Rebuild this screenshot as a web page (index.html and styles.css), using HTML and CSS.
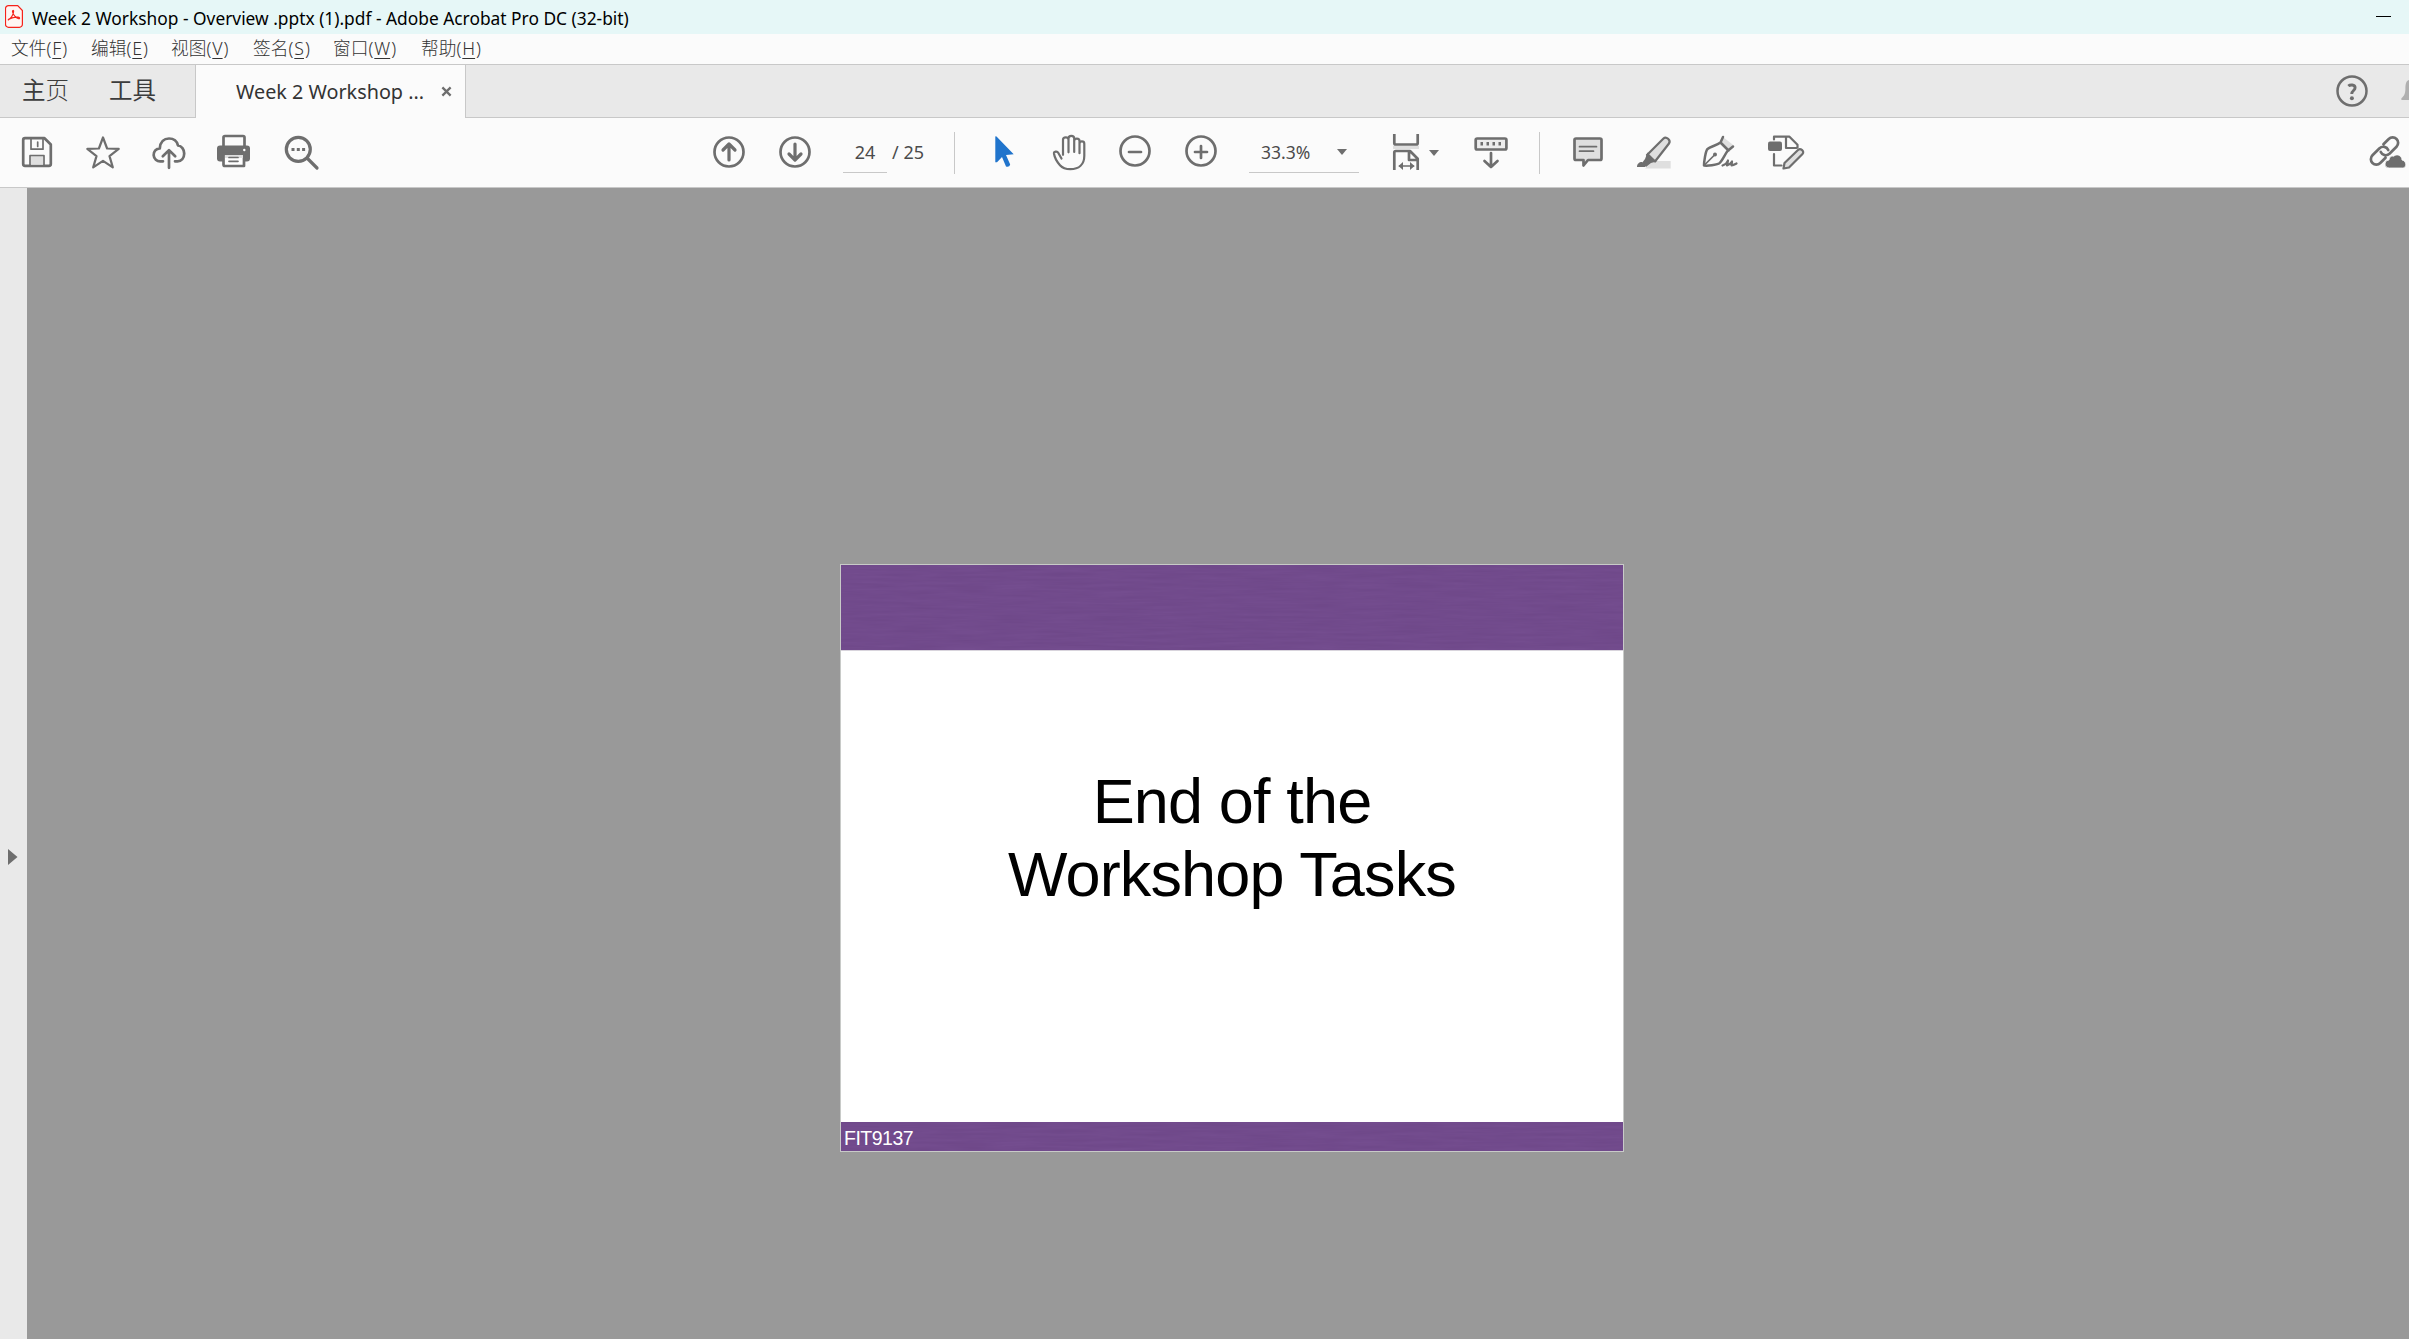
FILE: index.html
```html
<!DOCTYPE html>
<html lang="zh-CN">
<head>
<meta charset="utf-8">
<title>Week 2 Workshop - Overview .pptx (1).pdf - Adobe Acrobat Pro DC (32-bit)</title>
<link rel="stylesheet" href="styles.css">
</head>
<body>
<header class="titlebar">
  <svg class="app-icon" viewBox="0 0 18 23"><path d="M3.500 .6h9.200l4.700 4.900v13.800a3 3 0 0 1-3 3H3.500a3 3 0 0 1-3-3V3.600a3 3 0 0 1 3-3z" fill="#fff5f3" stroke="#f5231b" stroke-width="1.200"/><path d="M3.600 14.700c2-1 4.800-4.700 5-8.300.1-1.400-1.400-1.200-1 .4.600 3 3.200 6.300 5.900 6.900 1.500.3 1.500-1.300-.3-1.500-2.900-.3-6.200.4-8.800 1.700-1 .5-1.500 1.400-.8 .8z" fill="none" stroke="#f5231b" stroke-width="1.200"/></svg>
  <span class="title-text">Week 2 Workshop - Overview .pptx (1).pdf - Adobe Acrobat Pro DC (32-bit)</span>
  <span class="minimize"></span>
</header>
<nav class="menubar">
  <span>文件(<u>F</u>)</span><span>编辑(<u>E</u>)</span><span>视图(<u>V</u>)</span><span>签名(<u>S</u>)</span><span>窗口(<u>W</u>)</span><span>帮助(<u>H</u>)</span>
</nav>
<div class="tabbar">
  <div class="tab-group"><span>主<i>页</i></span><span>工具</span></div>
  <div class="tab-active"><span class="tab-name">Week 2 Workshop ...</span><svg class="close" viewBox="0 0 12 12"><path d="M1.500 1.500l9 9M10.500 1.500l-9 9" stroke="#6e6e6e" stroke-width="2.500"/></svg></div>
  <div class="tab-rest">
    <svg class="help" viewBox="0 0 32 32"><circle cx="16" cy="16" r="14.500" fill="none" stroke="#6e6e6e" stroke-width="2.500"/><path d="M12.300 11c1.500-1.300 6.800-1.900 6.800 1.700 0 2.800-3.400 2.800-3.400 6.300" fill="none" stroke="#6e6e6e" stroke-width="2.900"/><circle cx="15.900" cy="23.300" r="2" fill="#6e6e6e"/></svg>
    <svg class="bell" viewBox="0 0 8 24"><path d="M8 1C4.500 2 4.500 6 4.400 10c-.1 5-1.400 7-4 9.300V21H8z" fill="#b0b0b0"/></svg>
  </div>
</div>
<div class="toolbar">
  <div class="tools tools-file">
    <svg class="icon" viewBox="0 0 42 42"><path d="M9 7.200h19.500l6.300 6.300V33a1.800 1.800 0 0 1-1.800 1.800H9A1.800 1.800 0 0 1 7.200 33V9A1.800 1.800 0 0 1 9 7.200z"/><path class="thin" d="M15 8v10.200h12V8M14 34V24.700h14V34"/><path d="M15 25.700h12v8H15z" class="shade"/><path class="thin" d="M21.700 11v4.500"/></svg>
    <svg class="icon" viewBox="0 0 42 42"><path class="thin2" d="M21 6.500l4.100 11 11.600.4-9.200 7.200 3.300 11.300-9.800-6.600-9.800 6.600 3.300-11.300-9.200-7.200 11.600-.4z"/></svg>
    <svg class="icon" viewBox="0 0 42 42"><path d="M15 30.300h-2.500a6.500 6.500 0 0 1-.7-13C12.300 11 16 7.500 21 7.500c4.800 0 8 2.700 9 7 3.600.3 6.200 3.900 6.200 8 0 4.600-2.800 7.800-6.700 7.800H27M21 36.800V19.500M14.800 25.300l6.200-6.200 6.200 6.200"/></svg>
    <svg class="icon" viewBox="0 0 42 42"><path d="M9.500 15V6.500a1.500 1.500 0 0 1 1.500-1.500h18a1.500 1.500 0 0 1 1.500 1.500V15"/><path class="solid" d="M6 14.500h27a3 3 0 0 1 3 3v10a3 3 0 0 1-3 3H6a3 3 0 0 1-3-3v-10a3 3 0 0 1 3-3z"/><path d="M9.500 23h20.500v12h-19a1.500 1.500 0 0 1-1.500-1.500z" fill="#fff"/><path class="shade" d="M11 24h18v3H11z"/><path class="thin" d="M15 26.500h9M15 30.300h9"/><circle class="dot" cx="30.300" cy="19" r="1.200"/></svg>
    <svg class="icon" viewBox="0 0 42 42"><circle class="heavy" cx="18.300" cy="18.300" r="12"/><path class="heavy" d="M27.500 27.500l9.500 9.500"/><path class="solid" d="M11.500 17h3v3h-3zM16.800 17h3v3h-3zM22.100 17h3v3h-3z"/></svg>
  </div>
  <div class="tools tools-page">
    <svg class="icon" viewBox="0 0 42 42"><circle cx="21" cy="21" r="14.500"/><path class="heavy" d="M21 29V14M15 19l6-6 6 6"/></svg>
    <svg class="icon" viewBox="0 0 42 42"><circle cx="21" cy="21" r="14.500"/><path class="heavy" d="M21 13v15M15 23l6 6 6-6"/></svg>
    <span class="page-input">24</span><span class="page-total">/ 25</span>
  </div>
  <div class="separator"></div>
  <div class="tools tools-view">
    <svg class="icon" viewBox="0 0 42 42"><path class="pointer" d="M13.300 5.500Q14.200 4.800 15 6l16.700 17.300-7.700.7 4.200 9.500q-.7 2.800-4.200 2l-4-9.500-5 5.200h-1.700z"/></svg>
    <svg class="icon" viewBox="0 0 42 42"><path class="thin2" d="M13.500 27.500l-3.300-5.800c-1-1.800-4.500-1.200-4.200 1 .7 4.300 3.200 8.300 6 11.500 2.700 3 6 4 10.300 4 8.500 0 14-4.700 14-13.500v-12c0-3-4.800-3-4.800 0v9.500V10c0-3.300-5.300-3.300-5.300 0v11V7.500c0-3.500-5.700-3.500-5.700 0v13.800V8.800c0-3.200-5.500-3.200-5.500 0v15"/></svg>
    <svg class="icon" viewBox="0 0 42 42"><circle cx="21" cy="20" r="14.500"/><path d="M15 21h12"/></svg>
    <svg class="icon" viewBox="0 0 42 42"><circle cx="21" cy="20" r="14.500"/><path d="M15 21h12M21 15v12"/></svg>
    <span class="zoom-box"><span>33.3%</span><svg class="caret" viewBox="0 0 10 6"><path d="M0 0h10L5 6z" fill="#6e6e6e"/></svg></span>
    <svg class="icon icon-fit" viewBox="0 0 42 42"><path class="shade" d="M8 15h26v3H8z"/><path class="butt" d="M9.300 3v9a1.500 1.500 0 0 0 1.500 1.500h20.400a1.500 1.500 0 0 0 1.500-1.500V3M9.300 39V21.500A1.500 1.500 0 0 1 10.800 20H25l7.700 7.700V39M24 20v9h9"/><path class="thin" d="M14.500 35h14"/><path class="solid" d="M13.500 35l4.500-4v8zM29.500 35l-4.500-4v8z"/></svg>
    <svg class="caret caret-fit" viewBox="0 0 10 6"><path d="M0 0h10L5 6z" fill="#6e6e6e"/></svg>
    <svg class="icon icon-scroll" viewBox="0 0 42 42"><rect x="5.700" y="7.500" width="30.700" height="11" rx="1.500" fill="#ececec"/><path class="solid" d="M10.500 11h2.500v3.600h-2.500zM16.500 11H19v3.600h-2.500zM22.500 11H25v3.600h-2.500zM28.500 11H31v3.600h-2.500z"/><path d="M21 22v14M14.500 30l6.500 6 6.500-6"/></svg>
  </div>
  <div class="separator"></div>
  <div class="tools tools-edit">
    <svg class="icon" viewBox="0 0 42 42"><path d="M9 7.500h24a1.500 1.500 0 0 1 1.500 1.500v18.500A1.500 1.500 0 0 1 33 29H21l-4.500 5.500V29H9a1.500 1.500 0 0 1-1.500-1.500V9A1.500 1.500 0 0 1 9 7.500z" fill="#dfdfdf"/><path class="thin" d="M12.500 15.700h17M12.500 20.200h14"/></svg>
    <svg class="icon" viewBox="0 0 42 42"><path class="shade" d="M12 37.500l8-7.500h17.700v7.500z"/><path class="thin2" d="M14 24L30.500 7.500c2.500-2.500 8 1.500 5.300 5.300L22 30.500z" fill="#dfdfdf"/><path class="solid" d="M14.500 21.500l9 9-5.500 1.500-5 4-4-4 3-4zM4 36c0-3 2-5 5-5l3 3.500v1.500z"/></svg>
    <svg class="icon" viewBox="0 0 42 42"><path class="shade" d="M24 6l11.500 9-6 5.500-8-9z"/><path class="pen" d="M24 6l-2.500 5.500c-4 3-10 4-13 6.500-2 2-3.500 13-3.500 16.500 3.500.5 12.500-.5 15-2 3-2 5.500-8.500 8.500-12.500l5.500-4.500M21.500 11.500l8 8"/><path class="thin" d="M6 33.500l9.500-9.500"/><circle cx="16" cy="23.500" r="2" class="solid"/><path class="thin2" d="M23.500 34.500c3-1 5-3.500 5.500-5l-1 5c2-.5 4-2.500 5-4l-.5 4c2-.3 3.500-1.200 5-2"/></svg>
    <svg class="icon" viewBox="0 0 42 42"><rect class="solid" x="3" y="10.500" width="14" height="9.500" rx="2"/><path class="thin2" d="M9 8.500V5.700h15.500l8 8v3M21 6.500v10.500h10.500M9 23v11.500h7.500"/><path class="thin2" d="M18.500 37.500l1-5.500 13.500-13c2.500-2.500 7 1.500 4.500 4L24 36.500z" fill="#dfdfdf"/></svg>
  </div>
  <svg class="icon icon-link" viewBox="0 0 42 42"><g transform="rotate(-45 17.500 20)"><path d="M13.500 25.500H6a5.500 5.500 0 0 1 0-11h10a5.500 5.500 0 0 1 4.800 7.500M21.500 14.500H29a5.500 5.500 0 0 1 0 11H19a5.500 5.500 0 0 1-4.800-7.500"/></g><path class="cloud" d="M22 37a3.500 3.500 0 0 1 0-8c.3-3 2.500-4.500 4.800-3.700C29 22.500 35 24 35 29c5 1 4.800 8 1 8z"/></svg>
</div>
<main class="workspace">
  <aside class="side-pane"><svg class="expand" viewBox="0 0 10 16"><path d="M0 0l9.500 8L0 16z" fill="#6e6e6e"/></svg></aside>
  <section class="canvas">
    <article class="slide">
      <div class="band band-top"><svg class="grain"><filter id="grain" x="0" y="0" width="100%" height="100%" color-interpolation-filters="sRGB"><feTurbulence type="fractalNoise" baseFrequency=".02 .35" numOctaves="3" seed="4"/><feColorMatrix values="0 0 0 0 .4  0 0 0 0 .25  0 0 0 0 .5  .6 0 0 0 -.1"/></filter><rect width="100%" height="100%" filter="url(#grain)"/></svg></div>
      <h1>End of the<br>Workshop Tasks</h1>
      <div class="band band-bottom"><svg class="grain"><rect width="100%" height="100%" filter="url(#grain)"/></svg><span class="course">FIT9137</span></div>
    </article>
  </section>
</main>
</body>
</html>
```
FILE: styles.css
```css
* { box-sizing: border-box; }
body {
  margin: 0; width: 2409px; height: 1339px; overflow: hidden;
  display: flex; flex-direction: column;
  font-family: "Noto Sans", "Noto Sans CJK SC", sans-serif;
  color: #4b4b4b; background: #fbfbfb;
}
svg { display: block; flex: none; }
.titlebar { height: 34px; flex: none; display: flex; align-items: center; background: #e6f7f7; padding: 0 18px 0 5px; }
.app-icon { width: 18px; height: 23px; margin-bottom: 1px; }
.title-text { margin-left: 9px; font-size: 17.350px; color: #000; white-space: nowrap; line-height: 32px; padding-top: 2px; }
.minimize { width: 15px; height: 1px; background: #000; margin-left: auto; margin-top: -1px; }
.menubar {
  height: 31px; flex: none; display: grid; grid-template-columns: 80px 80px 82px 80px 88px 80px;
  padding-left: 11px; border-bottom: 1px solid #c8c8c8; font-size: 17.700px; line-height: 29px; white-space: nowrap;
  font-weight: 300; color: #333;
}
.menubar u { text-underline-offset: 3px; text-decoration-thickness: 1px; padding: 0 1px; }
.tabbar { height: 53px; flex: none; display: flex; }
.tab-group { width: 195px; background: #e9e9e9; border-bottom: 1px solid #c8c8c8; display: flex; gap: 40px; padding-left: 22px; font: 400 23.500px/48px "Noto Sans CJK SC", sans-serif; color: #3c3c3c; }
.tab-group i { font-style: normal; font-weight: 300; }
.tab-active { width: 271px; border: solid #c8c8c8; border-width: 0 1px; display: flex; align-items: center; padding-left: 40px; color: #333; }
.tab-name { font-size: 19.800px; white-space: nowrap; width: 205px; }
.close { width: 11px; height: 11px; }
.tab-rest { flex: 1; background: #e9e9e9; border-bottom: 1px solid #c8c8c8; display: flex; justify-content: flex-end; align-items: center; }
.help { width: 32px; height: 32px; margin-right: 33px; }
.bell { width: 8px; height: 24px; }
.toolbar { height: 70px; flex: none; display: flex; border-bottom: 1px solid #c8c8c8; padding-left: 4px; align-items: center; }
.tools { display: flex; align-items: center; height: 69px; }
.icon { width: 42px; height: 42px; margin: 0 12px; fill: none; stroke: #6e6e6e; stroke-width: 2.700px; stroke-linecap: round; stroke-linejoin: round; position: relative; top: -1px; }
.icon .heavy { stroke-width: 3.200px; }
.icon .thin { stroke-width: 1.700px; }
.icon .thin2 { stroke-width: 2.200px; }
.icon .pen { stroke-width: 2.500px; }
.icon .butt { stroke-linecap: butt; }
.icon .solid { fill: #6e6e6e; stroke: none; }
.icon .shade { fill: #dfdfdf; stroke: none; }
.icon .dot { fill: #fff; stroke: none; }
.icon .pointer { fill: #2074cc; stroke: none; }
.icon .cloud { fill: #6e6e6e; stroke: #fbfbfb; stroke-width: .8px; }
.tools-file { width: 330px; }
.tools-page { margin-left: 362px; width: 258px; font-size: 18px; }
.page-input, .page-total, .zoom-box { height: 41px; line-height: 41px; }
.page-input { width: 44px; margin-left: 15px; border-bottom: 1px solid #c8c8c8; text-align: center; }
.page-total { margin-left: 5px; white-space: nowrap; }
.separator { width: 1px; height: 42px; background: #c8c8c8; }
.tools-view { margin-left: 15px; width: 569px; }
.zoom-box { width: 110px; margin-left: 15px; border-bottom: 1px solid #c8c8c8; display: flex; align-items: center; justify-content: space-between; padding: 0 12px; font-size: 17.500px; }
.caret { width: 10px; height: 6px; }
.icon-fit { margin: 0 0 0 26px; }
.caret-fit { margin-left: 2px; }
.icon-scroll { margin: 0 0 0 31px; }
.tools-edit { margin-left: 15px; }
.icon-link { margin: 0 0 0 auto; }
.workspace { flex: 1; display: flex; min-height: 0; }
.side-pane { width: 27px; background: #e9e9e9; padding: 661px 0 0 8px; }
.expand { width: 10px; height: 16px; }
.canvas { flex: 1; background: #999; padding: 376px 0 0 813px; }
.slide { width: 784px; height: 588px; border: 1px solid #c8cac8; background: #fff; display: flex; flex-direction: column; }
.band { background: #744d8f; overflow: hidden; display: grid; }
.band > * { grid-area: 1 / 1; }
.grain { width: 100%; height: 100%; }
.band-top { height: 86px; border-bottom: 1px solid #d8d4dc; }
.band-bottom { height: 29px; }
.slide h1 { flex: 1; margin: 0; padding-top: 114px; text-align: center; color: #000; font: 400 63px/73px "Liberation Sans", sans-serif; letter-spacing: -.85px; white-space: nowrap; }
.course { color: #fff; font: 19.500px/32px "Liberation Sans", sans-serif; letter-spacing: -.5px; padding-left: 3px; position: relative; }
```
